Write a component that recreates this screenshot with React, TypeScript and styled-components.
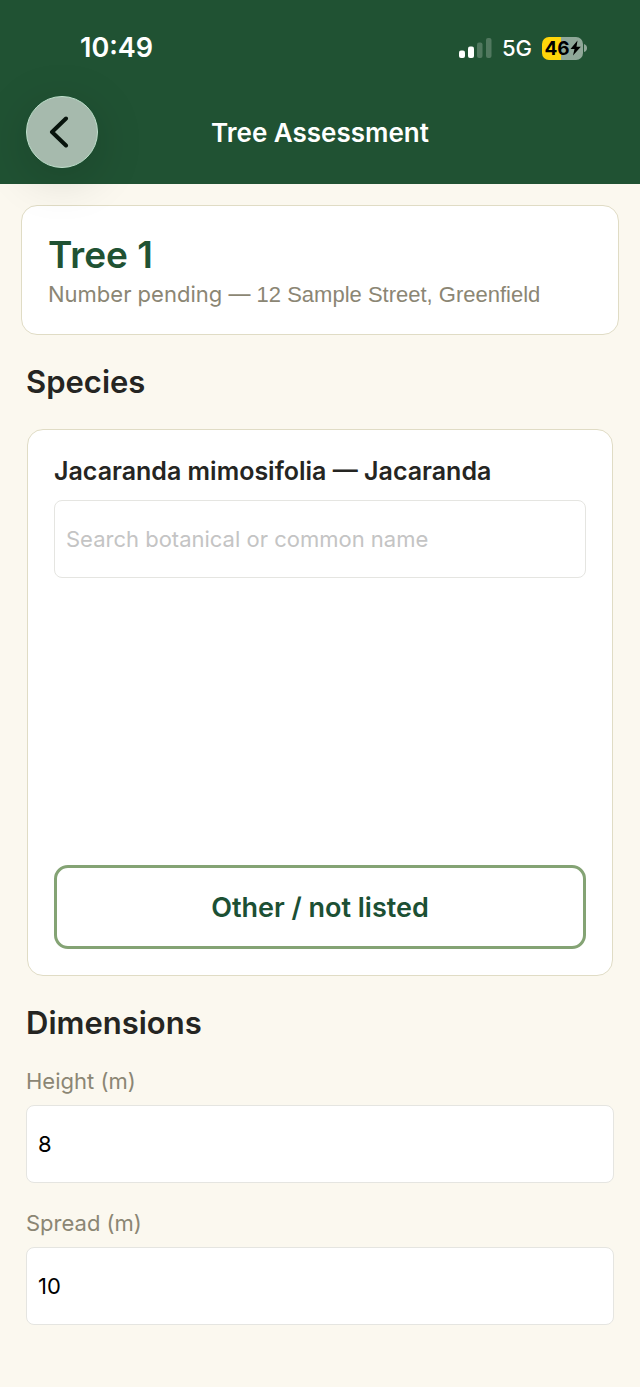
import React from "react";
import styled, { createGlobalStyle } from "styled-components";

const Global = createGlobalStyle`
  * { box-sizing: border-box; }
  body {
    margin: 0;
    background: #fbf8ef;
    font-family: Inter, "Liberation Sans", sans-serif;
    color: #252522;
  }
`;

const Top = styled.header`
  position: relative;
  z-index: 1;
  background: #205233;
  color: #fff;
  padding-bottom: 16px;
`;

const StatusBar = styled.div`
  display: flex;
  justify-content: space-between;
  align-items: center;
  height: 96px;
  padding: 0 53px 0 80px;
`;

const Clock = styled.time`
  font-size: 27px;
  line-height: 32px;
  font-weight: 600;
`;

const StatusIcons = styled.div`
  display: flex;
  align-items: center;
  gap: 10px;
`;

const Network = styled.span`
  font-size: 22px;
  line-height: 28px;
  font-weight: 500;
`;

const Battery = styled.div`
  display: flex;
  align-items: center;
  gap: 1px;
`;

const BatteryBody = styled.div`
  display: flex;
  align-items: center;
  justify-content: center;
  width: 41px;
  height: 23px;
  border-radius: 7px;
  background: linear-gradient(90deg, #ffd60a 46%, #90a899 46%);
  color: #000;
  font-size: 19px;
  font-weight: 700;
`;

const NavBar = styled.nav`
  display: grid;
  grid-template-columns: 72px 1fr 72px;
  align-items: center;
  padding: 0 26px;
`;

const BackButton = styled.button`
  display: flex;
  align-items: center;
  justify-content: center;
  width: 72px;
  height: 72px;
  padding: 0 6px 0 0;
  border: 1px solid #bfe0cc;
  border-radius: 50%;
  background: #a6baad;
  box-shadow: 0 10px 50px rgba(0, 0, 0, 0.16);
`;

const Title = styled.h1`
  margin: 0;
  padding-top: 2px;
  text-align: center;
  font-size: 26px;
  line-height: 32px;
  font-weight: 600;
`;

const Content = styled.main`
  padding: 21px 26px 62px;
`;

const Card = styled.section`
  background: #fff;
  border: 1px solid #e0dcc5;
  border-radius: 16px;
`;

const SummaryCard = styled(Card)`
  margin: 0 -5px;
  padding: 26px 26px 23px;
`;

const TreeName = styled.h2`
  margin: 0;
  color: #205233;
  font-size: 37px;
  line-height: 46px;
  font-weight: 600;
`;

const Detail = styled.p`
  margin: 0;
  color: #8b8674;
  font-size: 22px;
  line-height: 32px;
`;

const Address = styled.span`
  font-family: "Liberation Sans", sans-serif;
`;

const SectionTitle = styled.h2`
  margin: 27px 0 0;
  font-size: 31px;
  line-height: 40px;
  font-weight: 600;
`;

const SpeciesCard = styled(Card)`
  display: flex;
  flex-direction: column;
  margin: 27px 1px 0;
  padding: 24px 26px 26px;
`;

const Selected = styled.p`
  margin: 0 0 12px;
  font-size: 25px;
  line-height: 34px;
  font-weight: 600;
`;

const Input = styled.input`
  display: block;
  width: 100%;
  height: 78px;
  padding: 0 11px;
  border: 1px solid #e5e5e1;
  border-radius: 8px;
  background: #fff;
  color: #000;
  font-family: inherit;
  font-size: 22px;
  &::placeholder { color: #c4c4c4; opacity: 1; }
`;

const Results = styled.div`
  height: 287px;
`;

const OutlineButton = styled.button`
  height: 84px;
  border: 3px solid #84a374;
  border-radius: 14px;
  background: #fff;
  color: #1c5034;
  font-family: inherit;
  font-size: 27px;
  font-weight: 600;
`;

const Fields = styled.div`
  display: grid;
  gap: 24px;
  margin-top: 22px;
`;

const Label = styled.label`
  display: block;
  margin-bottom: 8px;
  color: #8b8674;
  font-size: 22px;
  line-height: 32px;
`;

export default function App() {
  return (
    <>
      <Global />
      <Top>
        <StatusBar>
          <Clock>10:49</Clock>
          <StatusIcons>
            <svg width="33" height="20" viewBox="0 0 33 20" fill="#fff" aria-hidden="true">
              <rect x="0" y="12.500" width="6" height="7.500" rx="2" />
              <rect x="9" y="8.500" width="6" height="11.500" rx="2" />
              <rect x="18" y="4.500" width="5.500" height="15.500" rx="2" opacity=".22" />
              <rect x="27" y="0" width="5.500" height="20" rx="2" opacity=".22" />
            </svg>
            <Network>5G</Network>
            <Battery>
              <BatteryBody>
                46
                <svg width="11" height="16" viewBox="0 0 11 16" aria-hidden="true">
                  <path d="M7.500.5.5 9h4L3 15.500 10.800 6.700H6.500z" />
                </svg>
              </BatteryBody>
              <svg width="3" height="8" viewBox="0 0 3 8" aria-hidden="true">
                <path d="M0 0q3 1 3 4t-3 4z" fill="#90a899" />
              </svg>
            </Battery>
          </StatusIcons>
        </StatusBar>
        <NavBar>
          <BackButton aria-label="Back">
            <svg width="20" height="32" viewBox="0 0 20 32" fill="none" stroke="#07130c" strokeWidth="4" strokeLinecap="round" strokeLinejoin="round">
              <path d="M17 2.500 3 16 17 29.500" />
            </svg>
          </BackButton>
          <Title>Tree Assessment</Title>
        </NavBar>
      </Top>
      <Content>
        <SummaryCard>
          <TreeName>Tree 1</TreeName>
          <Detail>
            Number pending — <Address>12 Sample Street, Greenfield</Address>
          </Detail>
        </SummaryCard>
        <SectionTitle>Species</SectionTitle>
        <SpeciesCard>
          <Selected>Jacaranda mimosifolia — Jacaranda</Selected>
          <Input type="search" aria-label="Search species" placeholder="Search botanical or common name" />
          <Results />
          <OutlineButton>Other / not listed</OutlineButton>
        </SpeciesCard>
        <SectionTitle>Dimensions</SectionTitle>
        <Fields>
          <div>
            <Label htmlFor="height">Height (m)</Label>
            <Input id="height" inputMode="decimal" defaultValue="8" />
          </div>
          <div>
            <Label htmlFor="spread">Spread (m)</Label>
            <Input id="spread" inputMode="decimal" defaultValue="10" />
          </div>
        </Fields>
      </Content>
    </>
  );
}
